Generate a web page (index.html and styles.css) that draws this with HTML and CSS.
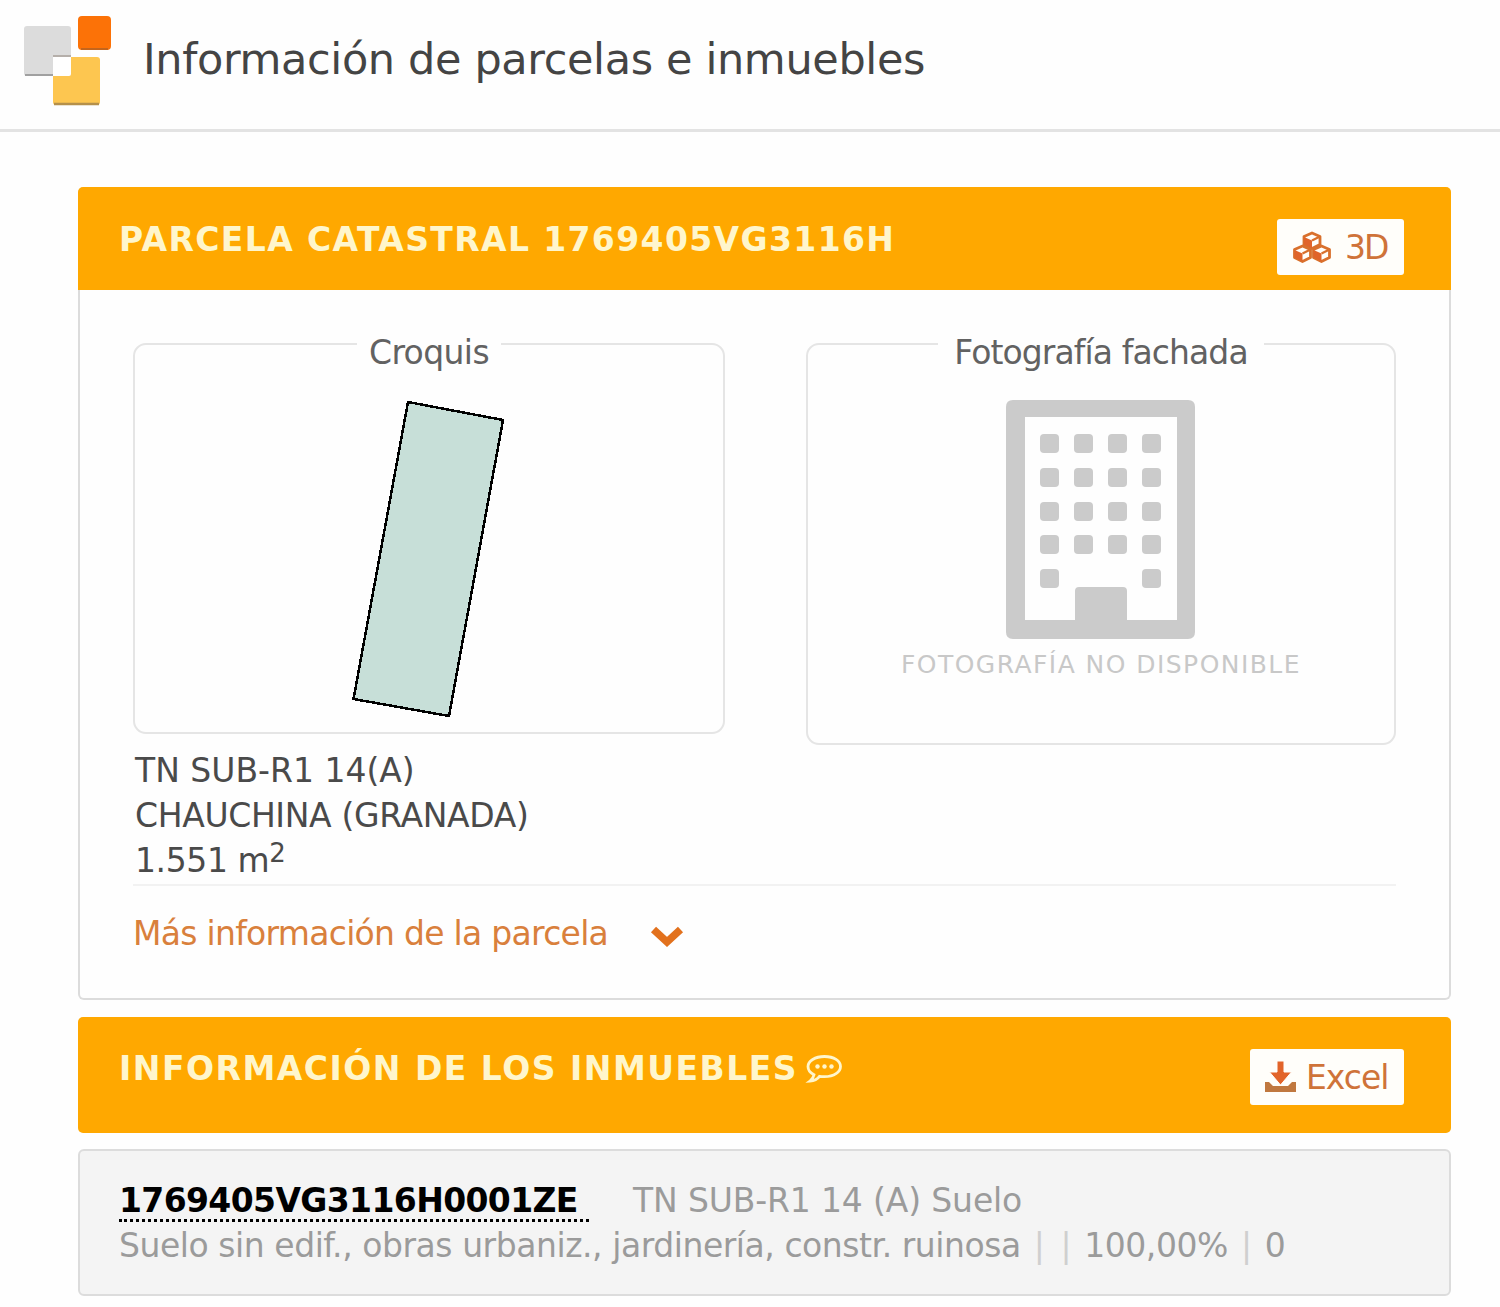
FILE: index.html
```
<!DOCTYPE html>
<html lang="es">
  <head>
    <meta charset="UTF-8" />
    <meta name="viewport" content="width=device-width, initial-scale=1.0" />
    <title>Información de parcelas e inmuebles</title>
    <link rel="stylesheet" href="styles.css">
  </head>
  <body>
    <header class="page-header">
      <svg class="logo" width="92" height="94" viewBox="0 0 92 94">
        <rect x="2" y="12" width="47" height="50" rx="3" fill="#dcdcdc" />
        <path d="M3 61h44" stroke="#a0a0a0" stroke-width="2" />
        <rect x="31" y="43" width="47" height="48" rx="3" fill="#fdc650" />
        <path d="M32 90h45" stroke="#b5904a" stroke-width="2.5" />
        <path d="M31 43h18v17q0 2-2 2H31z" fill="#fff" />
        <path d="M31 42h18" stroke="#a8a09a" stroke-width="1.5" />
        <rect x="56" y="2" width="33" height="34" rx="4" fill="#fc7207" />
        <path d="M59 35h27" stroke="#c4651c" stroke-width="2" />
      </svg>
      <h1>Información de parcelas e inmuebles</h1>
    </header>

    <main class="content">
      <section class="panel">
        <div class="panel-heading">
          <h2>PARCELA CATASTRAL 1769405VG3116H</h2>
          <button class="btn btn-3d">
            <svg width="40" height="32" viewBox="0 0 40 32">
              <g fill="#fffefa" stroke="#d9702c" stroke-width="2.800" stroke-linejoin="round">
                <path d="M20 2l8 3.500v8l-8 4-8-4v-8z" />
                <path d="M10.500 15l8 3.500v8l-8 4-8-4v-8z" />
                <path d="M29.500 15l8 3.500v8l-8 4-8-4v-8z" />
              </g>
              <g fill="#e0642a">
                <path d="M12 6l8 3.500v8l-8-4zM2.500 19l8 3.500v8l-8-4zM21.500 19l8 3.500v8l-8-4z" />
              </g>
              <path d="M20 9.500l8-4M10.500 22.500l8-4M29.500 22.500l8-4" stroke="#d9702c" stroke-width="2.200" />
            </svg>
            <span>3D</span>
          </button>
        </div>

        <div class="panel-body">
          <div class="media-row">
            <div class="media-col">
              <fieldset class="frame frame-croquis">
                <legend>Croquis</legend>
                <svg class="croquis" width="154" height="319" viewBox="0 0 154 319" shape-rendering="crispEdges">
                  <path d="M56 2L151 20L97 316L1.500 299z" fill="#c7dfd8" stroke="#000" stroke-width="2.500" />
                </svg>
              </fieldset>
              <div class="address">
                <div>TN SUB-R1 14(A)</div>
                <div class="town">CHAUCHINA (GRANADA)</div>
                <div class="area">1.551 m<sup>2</sup></div>
              </div>
            </div>
            <fieldset class="frame frame-photo">
              <legend>Fotografía fachada</legend>
              <svg class="building" width="189" height="239" viewBox="0 0 189 239" fill="#cbcbcb">
                <path fill-rule="evenodd" d="M7 0h175q7 0 7 7v225q0 7-7 7H7q-7 0-7-7V7q0-7 7-7zM19 17v203h50v-29q0-4 4-4h44q4 0 4 4v29h50V17z" />
                <g id="floor">
                  <rect x="34" y="34" width="19" height="19" rx="4" />
                  <rect x="68" y="34" width="19" height="19" rx="4" />
                  <rect x="102" y="34" width="19" height="19" rx="4" />
                  <rect x="136" y="34" width="19" height="19" rx="4" />
                </g>
                <use href="#floor" y="34" />
                <use href="#floor" y="68" />
                <use href="#floor" y="101" />
                <rect x="34" y="169" width="19" height="19" rx="4" />
                <rect x="136" y="169" width="19" height="19" rx="4" />
              </svg>
              <div class="no-photo">FOTOGRAFÍA NO DISPONIBLE</div>
            </fieldset>
          </div>

          <a class="more-info">
            <span>Más información de la parcela</span>
            <svg width="34" height="23" viewBox="0 0 34 23">
              <path d="M3.500 4.500L17 17L30.500 4.500" fill="none" stroke="#e2711d" stroke-width="7.500" />
            </svg>
          </a>
        </div>
      </section>

      <section class="panel-heading heading-inmuebles">
        <h2>
          <span>INFORMACIÓN DE LOS INMUEBLES</span>
          <svg width="38" height="30" viewBox="0 0 38 30">
            <path d="M19.500 2.500C10 2.500 3 7 3 12.500c0 3.500 2.500 6.500 6 8.300-.5 2.700-2 4.700-4 6.200 4.500-.3 7.500-2 9.500-4.700 1.600.3 3.200.4 5 .4 9.500 0 16-4.700 16-10.200s-6.500-10-16-10z" fill="none" stroke="#fff6cc" stroke-width="2.800" />
            <g fill="#fff6cc">
              <circle cx="12.500" cy="12.500" r="2.200" />
              <circle cx="19.500" cy="12.500" r="2.200" />
              <circle cx="26.500" cy="12.500" r="2.200" />
            </g>
          </svg>
        </h2>
        <button class="btn btn-excel">
          <svg width="31" height="32" viewBox="0 0 31 32">
            <path d="M0 21h4l4 4h15l4-4h4v10H0z" fill="#c0783f" />
            <path d="M12 0h7v11h7.500L15.500 24 4.500 11H12z" fill="#e2642a" stroke="#fffefa" />
          </svg>
          <span>Excel</span>
        </button>
      </section>

      <section class="inmueble">
        <div><a class="ref">1769405VG3116H0001ZE</a><span>TN SUB-R1 14 (A) Suelo</span></div>
        <div class="uso">Suelo sin edif., obras urbaniz., jardinería, constr. ruinosa <i>|</i> <i>|</i> 100,00% <i>|</i> 0</div>
      </section>
    </main>
  </body>
</html>
```
FILE: styles.css
```
* {
  margin: 0;
  padding: 0;
  box-sizing: border-box;
}

body {
  font-family: Verdana, "DejaVu Sans", sans-serif;
  font-size: 33px;
  line-height: 45px;
  color: #4a4a4a;
  background: #fefefe;
  white-space: nowrap;
  overflow: hidden;
}

svg {
  flex: none;
}

.page-header {
  display: flex;
  align-items: flex-start;
  height: 132px;
  padding-left: 22px;
  border-bottom: 3px solid #e3e3e3;
}

.logo {
  margin-top: 14px;
}

.page-header h1 {
  margin-left: 29px;
  font-size: 43px;
  font-weight: 400;
  line-height: 118px;
  letter-spacing: -0.36px;
  color: #444;
}

.content {
  display: flex;
  flex-direction: column;
  width: 1373px;
  margin: 55px 0 0 78px;
}

.panel {
  height: 813px;
  border: 2px solid #dcdcdc;
  border-top: none;
  border-radius: 6px;
}

.panel-heading {
  display: flex;
  align-items: flex-start;
  justify-content: space-between;
  height: 103px;
  padding: 0 47px 0 41px;
  background: #ffa800;
  border-radius: 5px;
}

.panel > .panel-heading {
  margin: 0 -2px;
  border-radius: 5px 5px 0 0;
}

.panel-heading h2 {
  display: flex;
  font-size: 33px;
  line-height: 105px;
  letter-spacing: 1.38px;
  color: #fff6cc;
}

.heading-inmuebles {
  height: 116px;
  margin-top: 17px;
}

.heading-inmuebles h2 {
  line-height: 104px;
  letter-spacing: 1.5px;
}

.heading-inmuebles h2 svg {
  margin: 37px 0 0 7px;
}

.btn {
  display: flex;
  align-items: center;
  height: 56px;
  margin-top: 32px;
  padding-left: 15px;
  border: none;
  border-radius: 3px;
  background: #fffefa;
  color: #cf7339;
  font: inherit;
}

.btn-3d {
  width: 127px;
  gap: 13px;
  letter-spacing: -2px;
}

.btn-excel {
  width: 154px;
  gap: 10px;
  letter-spacing: -1px;
}

.panel-body {
  padding: 48px 53px 0 53px;
}

.media-row {
  display: flex;
  justify-content: space-between;
  align-items: flex-start;
  height: 548px;
  border-bottom: 2px solid #f2f2f2;
}

.media-col {
  width: 592px;
}

.frame {
  border: 2px solid #e5e5e5;
  border-radius: 13px;
  text-align: center;
}

.frame legend {
  height: 12px;
  margin: 0 auto;
  padding: 0 12px;
  line-height: 30px;
  letter-spacing: -0.6px;
  color: #626262;
}

.frame-croquis {
  height: 396px;
}

.frame-photo {
  width: 590px;
  height: 407px;
}

.frame-photo legend {
  padding: 0 16px;
  letter-spacing: -0.9px;
}

.frame svg {
  display: block;
}

.croquis {
  margin: 50px 0 0 217px;
}

.building {
  margin: 50px 0 0 198px;
}

.no-photo {
  margin-top: 3px;
  font-size: 25px;
  letter-spacing: 1.45px;
  color: #c8c8c8;
}

.address {
  margin: 14px 0 0 2px;
}

.town {
  letter-spacing: -0.35px;
}

.area {
  letter-spacing: -0.4px;
}

.address sup {
  font-size: 26px;
  line-height: 0;
  vertical-align: 10px;
}

.more-info {
  display: flex;
  align-items: center;
  gap: 42px;
  margin-top: 25px;
  letter-spacing: -0.72px;
  color: #d9803c;
}

.more-info svg {
  margin-top: 6px;
}

.inmueble {
  height: 147px;
  margin-top: 16px;
  padding: 27px 39px 0;
  border: 2px solid #dcdcdc;
  border-radius: 6px;
  background: #f4f4f4;
  color: #9b9b9b;
  letter-spacing: -0.14px;
}

.uso {
  letter-spacing: -0.45px;
}

.uso i {
  margin: 0 3px;
  font-style: normal;
  color: #cfcfcf;
}

.ref {
  display: inline-block;
  width: 470px;
  height: 44px;
  margin-right: 44px;
  border-bottom: 3px dotted #000;
  font-weight: 700;
  letter-spacing: -0.62px;
  color: #000;
}
```
